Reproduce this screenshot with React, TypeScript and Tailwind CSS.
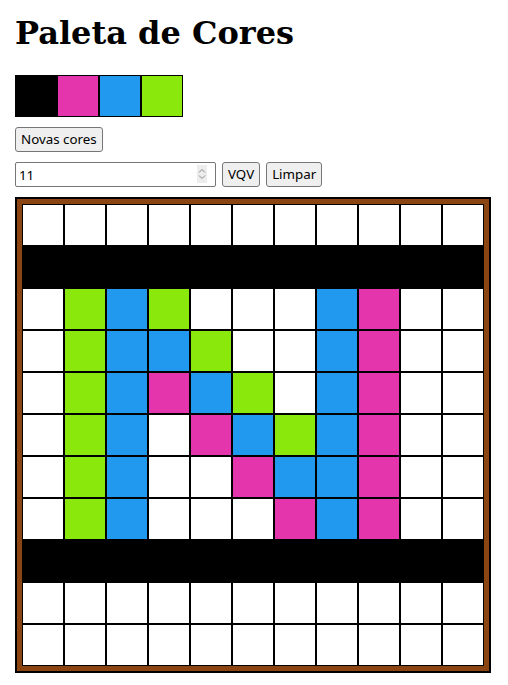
import { useState } from 'react'

const K = '#000000'
const P = '#e535ad'
const B = '#2199ee'
const G = '#8ae80c'
const W = '#ffffff'

const palette = [K, P, B, G]

const board: string[][] = [
  [W, W, W, W, W, W, W, W, W, W, W],
  [K, K, K, K, K, K, K, K, K, K, K],
  [W, G, B, G, W, W, W, B, P, W, W],
  [W, G, B, B, G, W, W, B, P, W, W],
  [W, G, B, P, B, G, W, B, P, W, W],
  [W, G, B, W, P, B, G, B, P, W, W],
  [W, G, B, W, W, P, B, B, P, W, W],
  [W, G, B, W, W, W, P, B, P, W, W],
  [K, K, K, K, K, K, K, K, K, K, K],
  [W, W, W, W, W, W, W, W, W, W, W],
  [W, W, W, W, W, W, W, W, W, W, W],
]

const btn =
  "px-[5px] h-[25px] bg-[#efefef] border border-[#767676] rounded-[3px] text-[13.33px] text-black font-['Noto_Sans',sans-serif]"

export default function App() {
  const [size, setSize] = useState('11')

  return (
    <div className="min-h-screen bg-white px-[15px] pt-[15px] pb-4">
      <h1 className="font-['DejaVu_Serif',serif] font-bold text-[32px] leading-[37px] mb-[23px] text-black">
        Paleta de Cores
      </h1>

      <div className="flex">
        {palette.map((c, i) => (
          <div key={i} className="w-[42px] h-[42px] border border-black" style={{ backgroundColor: c }} />
        ))}
      </div>

      <div className="mt-[10px] flex">
        <button className={btn}>Novas cores</button>
      </div>

      <div className="mt-[10px] flex gap-[6px]">
        <div className="relative">
          <input
            type="text"
            inputMode="numeric"
            value={size}
            onChange={(e) => setSize(e.target.value)}
            className="block w-[201px] h-[25px] pl-[3px] pr-[20px] border border-[#767676] rounded-[2px] text-[13.33px] text-black font-['Noto_Sans',sans-serif] bg-white outline-none"
          />
          <div className="absolute left-[182px] top-[3px] w-[10px] h-[18px] bg-[#ededed] flex items-center justify-center">
            <svg width="8" height="12" viewBox="0 0 8 12" fill="none" stroke="#8a8a8a" strokeWidth="1">
              <path d="M1 4.5 L4 1.5 L7 4.5" />
              <path d="M1 7.5 L4 10.5 L7 7.5" />
            </svg>
          </div>
        </div>
        <button className={btn}>VQV</button>
        <button className={btn}>Limpar</button>
      </div>

      <div className="mt-[10px] w-fit border-2 border-black">
        <div className="border-[5px] border-[#8b4513] grid grid-cols-[repeat(11,42px)]">
          {board.flat().map((c, i) => (
            <div key={i} className="w-[42px] h-[42px] border border-black" style={{ backgroundColor: c }} />
          ))}
        </div>
      </div>
    </div>
  )
}
